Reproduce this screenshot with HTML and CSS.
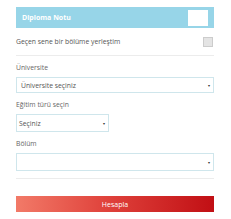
FILE: index.html
```html
<!DOCTYPE html>
<html lang="tr">
	<head>
		<meta charset="UTF-8" />
		<title>Diploma Notu</title>
		<link rel="stylesheet" href="styles.css">
	</head>
	<body>
		<div class="calc">
			<div class="calc-head">
				<span class="calc-title">Diploma Notu</span>
				<div class="grade-box"></div>
			</div>
			<div class="check-row">
				<span>Geçen sene bir bölüme yerleştim</span>
				<div class="check"></div>
			</div>
			<div class="field">
				<div class="field-label">Üniversite</div>
				<div class="pick pick-uni"><span>Üniversite seçiniz</span><span class="arrow">▾</span></div>
			</div>
			<div class="field">
				<div class="field-label">Eğitim türü seçin</div>
				<div class="pick pick-small"><span>Seçiniz</span><span class="arrow">▾</span></div>
			</div>
			<div class="field field-last">
				<div class="field-label">Bölüm</div>
				<div class="pick pick-dept"><span></span><span class="arrow">▾</span></div>
			</div>
			<div class="calc-btn">Hesapla</div>
		</div>
	</body>
</html>
```

FILE: styles.css
```css
body {
	margin: 0;
	background: #fff;
	font-family: "Open Sans", Arial, sans-serif;
	color: #555;
}
.calc {
	width: 198px;
	margin-left: 16px;
	padding-top: 7px;
}
.calc-head {
	height: 21px;
	background: #97d5e8;
	display: flex;
	align-items: center;
	justify-content: space-between;
	padding: 0 6px;
}
.calc-title {
	color: #fff;
	font-weight: bold;
	font-size: 7px;
}
.grade-box {
	width: 20px;
	height: 16px;
	background: #fff;
}
.check-row {
	height: 27px;
	display: flex;
	align-items: center;
	justify-content: space-between;
	font-size: 6.8px;
	color: #555;
	border-bottom: 1px solid #ececec;
}
.check {
	width: 8px;
	height: 8px;
	background: #e4e4e4;
	border: 1px solid #ccc;
	margin-right: 1px;
}
.field-label {
	font-size: 6.8px;
	color: #666;
	height: 21px;
	display: flex;
	align-items: center;
	padding-top: 2px;
	box-sizing: border-box;
}
.pick {
	border: 1px solid #cfe6ec;
	display: flex;
	align-items: center;
	justify-content: space-between;
	padding: 0 3px 0 4px;
	font-size: 6.8px;
	color: #555;
	box-sizing: border-box;
}
.pick-uni {
	height: 16px;
}
.pick-small {
	width: 93px;
	height: 18px;
	padding-left: 2px;
}
.pick-dept {
	height: 18px;
}
.arrow {
	font-size: 3.5px;
	color: #333;
}
.field-last {
	padding-bottom: 7px;
	border-bottom: 1px solid #ececec;
}
.calc-btn {
	margin-top: 17px;
	height: 16px;
	background: linear-gradient(to right, #f27a68, #e0433c 45%, #c10f14);
	color: #fff;
	font-size: 7px;
	display: flex;
	align-items: center;
	justify-content: center;
}
```
